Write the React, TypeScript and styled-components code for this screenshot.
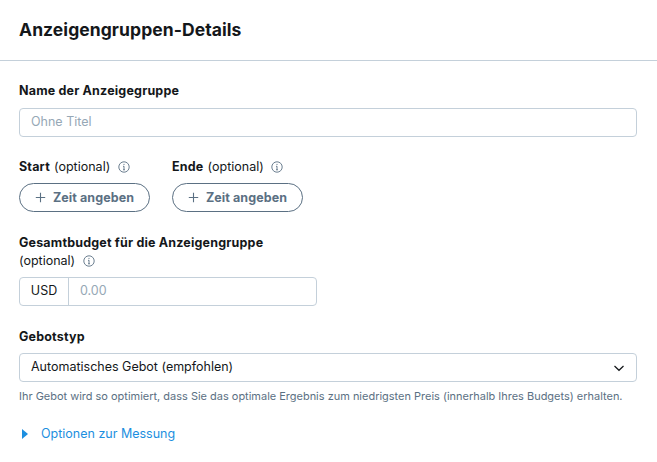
import React from 'react';
import styled, { createGlobalStyle } from 'styled-components';

const GlobalStyle = createGlobalStyle`
  html, body {
    margin: 0;
    padding: 0;
    background: #fff;
  }
  body {
    font-family: Inter, "Liberation Sans", sans-serif;
    color: #14171a;
    -webkit-font-smoothing: antialiased;
  }
  * {
    box-sizing: border-box;
  }
`;

const Page = styled.div`
  width: 657px;
  height: 462px;
  overflow: hidden;
`;

const Header = styled.header`
  height: 61px;
  padding: 19px 19px 0;
  border-bottom: 1px solid #c4d0da;
`;

const Title = styled.h1`
  margin: 0;
  font-size: 17.5px;
  line-height: 21px;
  font-weight: 700;
  letter-spacing: 0.07px;
`;

const Form = styled.form`
  display: flex;
  flex-direction: column;
  padding: 21px 20px 0 19px;
`;

const Field = styled.div`
  margin-bottom: 0;
`;

const BudgetField = styled.div`
  margin-top: 22px;
  margin-bottom: 22px;
`;

const Label = styled.div`
  display: flex;
  align-items: center;
  height: 18px;
  font-size: 12.5px;
  line-height: 18px;
  font-weight: 700;
  letter-spacing: 0.18px;
  white-space: pre;
`;

const Optional = styled.span`
  font-weight: 400;
  letter-spacing: 0;
`;

const ScheduleOptional = styled(Optional)`
  margin-left: 1px;
`;

const Info = styled.svg`
  width: 12px;
  height: 12px;
  margin-left: 7.5px;
  flex: none;
`;

const Box = styled.div<{ $width?: string }>`
  display: flex;
  align-items: center;
  width: ${({ $width }) => $width ?? '100%'};
  height: 29px;
  border: 1px solid #c4d0da;
  border-radius: 4px;
  font-size: 12.5px;
  background: #fff;
`;

const NameBox = styled(Box)`
  margin-top: 8px;
  padding: 0 11px 2px;
`;

const Placeholder = styled.span`
  color: #96a8b6;
`;

const Schedule = styled.div`
  display: flex;
  gap: 22px;
  margin-top: 21px;
`;

const PillButton = styled.button`
  display: flex;
  align-items: center;
  justify-content: center;
  gap: 7px;
  width: 131px;
  height: 29px;
  margin-top: 7px;
  padding: 0;
  border: 1px solid #5b7083;
  border-radius: 15px;
  background: #fff;
  color: #5b7083;
  font-family: inherit;
  font-size: 12.5px;
  font-weight: 700;
  letter-spacing: 0.08px;
`;

const Plus = styled.svg`
  width: 11px;
  height: 11px;
`;

const BudgetBox = styled(Box)`
  margin-top: 7px;
`;

const Currency = styled.div`
  display: flex;
  align-items: center;
  justify-content: center;
  width: 49px;
  height: 100%;
  padding-bottom: 2px;
  border-right: 1px solid #c4d0da;
`;

const Amount = styled.div`
  padding: 0 0 2px 11px;
`;

const SelectBox = styled(Box)`
  justify-content: space-between;
  margin-top: 7px;
  padding: 0 11px;
`;

const SelectValue = styled.span`
  padding-bottom: 2px;
`;

const Chevron = styled.svg`
  width: 12px;
  height: 12px;
`;

const Help = styled.p`
  margin: 6px 0 0;
  font-size: 10.97px;
  line-height: 16px;
  color: #5b7083;
`;

const Disclosure = styled.a`
  display: flex;
  align-items: center;
  gap: 13px;
  margin-top: 21px;
  padding-left: 3px;
  font-size: 12.5px;
  line-height: 18px;
  color: #1d8fe0;
`;

const Caret = styled.svg`
  width: 6px;
  height: 10px;
`;

const InfoIcon = () => (
  <Info viewBox="0 0 12 12" fill="none" stroke="#5b7083">
    <circle cx="6" cy="6" r="5.2" strokeWidth="0.9" />
    <path d="M6 5.2V8.8M5 5.3H6M5 8.8H7" strokeWidth="0.9" />
    <circle cx="6" cy="3.3" r="0.6" fill="#5b7083" stroke="none" />
  </Info>
);

const TimeButton = () => (
  <PillButton type="button">
    <Plus viewBox="0 0 11 11" stroke="#5b7083" strokeWidth="1.1">
      <path d="M5.5 0.8V10.2M0.8 5.5H10.2" />
    </Plus>
    Zeit angeben
  </PillButton>
);

export default function App() {
  return (
    <Page>
      <GlobalStyle />
      <Header>
        <Title>Anzeigengruppen-Details</Title>
      </Header>
      <Form>
        <Field>
          <Label>Name der Anzeigegruppe</Label>
          <NameBox>
            <Placeholder>Ohne Titel</Placeholder>
          </NameBox>
        </Field>
        <Schedule>
          <Field>
            <Label>
              Start <ScheduleOptional>(optional)</ScheduleOptional>
              <InfoIcon />
            </Label>
            <TimeButton />
          </Field>
          <Field>
            <Label>
              Ende <ScheduleOptional>(optional)</ScheduleOptional>
              <InfoIcon />
            </Label>
            <TimeButton />
          </Field>
        </Schedule>
        <BudgetField>
          <Label>Gesamtbudget für die Anzeigengruppe</Label>
          <Label>
            <Optional>(optional)</Optional>
            <InfoIcon />
          </Label>
          <BudgetBox $width="298px">
            <Currency>USD</Currency>
            <Amount>
              <Placeholder>0.00</Placeholder>
            </Amount>
          </BudgetBox>
        </BudgetField>
        <Field>
          <Label>Gebotstyp</Label>
          <SelectBox>
            <SelectValue>Automatisches Gebot (empfohlen)</SelectValue>
            <Chevron viewBox="0 0 12 12" fill="none" stroke="#14171a" strokeWidth="1.2">
              <path d="M1.5 4L6 8.3L10.5 4" />
            </Chevron>
          </SelectBox>
          <Help>
            Ihr Gebot wird so optimiert, dass Sie das optimale Ergebnis zum niedrigsten Preis (innerhalb Ihres Budgets) erhalten.
          </Help>
        </Field>
        <Disclosure>
          <Caret viewBox="0 0 6 10" fill="#1d8fe0">
            <path d="M0 0L6 5L0 10Z" />
          </Caret>
          Optionen zur Messung
        </Disclosure>
      </Form>
    </Page>
  );
}
